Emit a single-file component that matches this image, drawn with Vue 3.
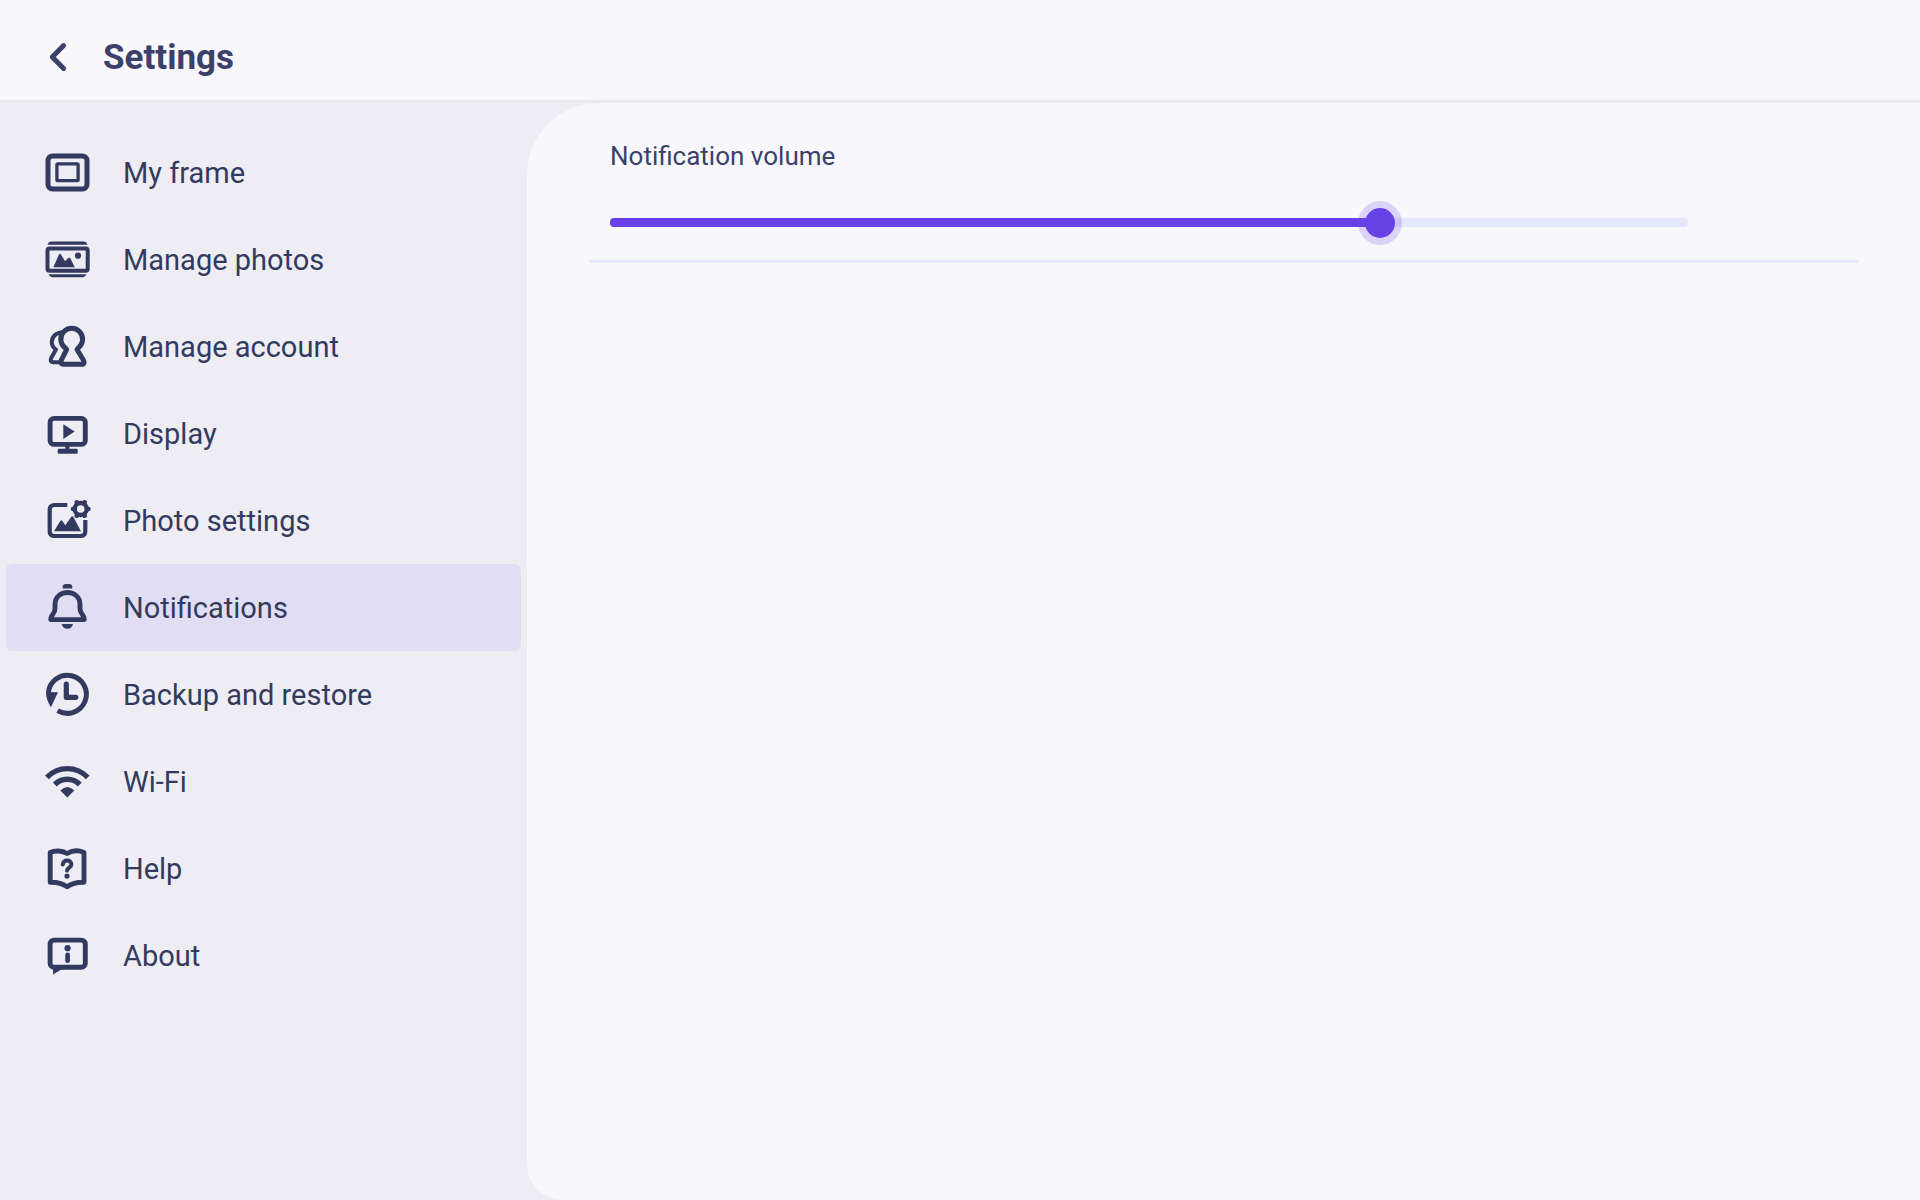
<script setup>
import { ref, computed } from 'vue'

const items = [
  { id: 'frame', label: 'My frame' },
  { id: 'photos', label: 'Manage photos' },
  { id: 'account', label: 'Manage account' },
  { id: 'display', label: 'Display' },
  { id: 'photo-settings', label: 'Photo settings' },
  { id: 'notifications', label: 'Notifications' },
  { id: 'backup', label: 'Backup and restore' },
  { id: 'wifi', label: 'Wi-Fi' },
  { id: 'help', label: 'Help' },
  { id: 'about', label: 'About' },
]

const active = ref('notifications')
const maxVolume = 7
const volume = ref(5)
const fillWidth = computed(() => `${(volume.value / maxVolume) * 100}%`)
</script>

<template>
  <div class="page">
    <header class="header">
      <button class="back" type="button" aria-label="Back">
        <svg width="24" height="32" viewBox="0 1 24 32" fill="none" stroke="currentColor" stroke-width="5" stroke-linecap="round" stroke-linejoin="round">
          <path d="M17.6 4.6 6.3 16 17.6 27.4" />
        </svg>
      </button>
      <h1 class="title">Settings</h1>
    </header>

    <div class="body">
      <nav class="menu" aria-label="Settings sections">
        <a
          v-for="item in items"
          :key="item.id"
          :href="'#' + item.id"
          class="item"
          :class="{ active: item.id === active }"
          :aria-current="item.id === active ? 'page' : undefined"
          @click.prevent="active = item.id"
        >
          <svg class="icon" viewBox="0 1 48 49" fill="none" stroke="currentColor" aria-hidden="true">
            <g v-if="item.id === 'frame'">
              <rect x="5" y="8" width="39" height="33" rx="4.5" stroke-width="5" />
              <rect x="13.9" y="15.900" width="21.200" height="16.800" rx="1" stroke-width="3.300" />
            </g>
            <g v-else-if="item.id === 'photos'">
              <path d="M4.500 9.800Q5.500 6.400 8.500 6.400H40.500Q43.500 6.400 44.500 9.800Z" fill="currentColor" stroke="none" />
              <rect x="4.500" y="13.600" width="40.200" height="22.200" rx="2" stroke-width="4" />
              <path d="M5.500 39.300H43.500Q42.500 42.200 40 42.200H9Q6.500 42.200 5.500 39.300Z" fill="currentColor" stroke="none" />
              <path d="M10.300 32.300 16 19.500Q17 18 18 19.500L22 26.200 25.300 23Q26.300 22 27.300 23.200L31.800 32.300Z" fill="currentColor" stroke="none" />
              <circle cx="35" cy="20.700" r="3.100" fill="currentColor" stroke="none" />
            </g>
            <g v-else-if="item.id === 'account'" stroke-linejoin="round">
              <path d="M20 10.300C13 10.300 8.800 15 8.800 20.200 8.800 23.500 10.500 25.800 13 27.600L8.300 35.800Q6.500 40.200 10.500 40.300H17" stroke-width="4" />
              <path d="M23.700 27.300 22.200 26A10.900 10.900 0 1 1 35.200 26L34 27.500 40.400 38Q42.200 42.200 39 42.300H20Q17 42.200 18.400 38Z" stroke-width="5" />
            </g>
            <g v-else-if="item.id === 'display'">
              <rect x="7.100" y="9.400" width="35.200" height="26" rx="4" stroke-width="4.900" />
              <path d="M20.300 15.300 31.700 22.600 20.300 30Z" fill="currentColor" stroke="none" />
              <path d="M22.300 36H26.500V39.700H33.700Q34.700 39.700 34.700 40.700V43.700Q34.700 44.700 33.700 44.700H15.700Q14.700 44.700 14.700 43.700V40.700Q14.700 39.700 15.700 39.700H22.300Z" fill="currentColor" stroke="none" />
            </g>
            <g v-else-if="item.id === 'photo-settings'">
              <path d="M24.300 9H11.500Q6.700 9 6.700 13.800V35.200Q6.700 40 11.500 40H37.500Q42.300 40 42.300 35.200V24" stroke-width="4.200" />
              <path d="M11 35.300 17.300 25Q18.300 23.500 19.300 25L22.300 29.300 28.300 20.800Q29.300 19.500 30.300 20.800L38 35.300Z" fill="currentColor" stroke="none" />
              <circle cx="37.700" cy="13" r="6" stroke-width="4.400" />
              <path d="M44.900 13H45.400M41.300 6.800 41.600 6.300M34.100 6.800 33.800 6.300M30.500 13H30M34.100 19.200 33.800 19.700M41.300 19.200 41.600 19.700" stroke-width="4.600" stroke-linecap="round" />
            </g>
            <g v-else-if="item.id === 'notifications'">
              <path d="M19.700 5.400V3.600Q20 1 23 1H26Q29 1 29.300 3.600V5.400Z" fill="currentColor" stroke="none" />
              <path d="M7.700 36.600Q7.800 33.500 9.800 31.300 12 28.500 12 25.500V21.500C12 5.500 37 5.500 37 21.500V25.500Q37 28.500 39.200 31.300 41.200 33.500 41.300 36.600Z" stroke-width="4.900" stroke-linejoin="round" />
              <path d="M18.700 40.900H30Q29 45.700 24.400 45.700T18.700 40.900Z" fill="currentColor" stroke="none" />
            </g>
            <g v-else-if="item.id === 'backup'">
              <path d="M14.600 40.600A19 19 0 1 0 5.400 23" stroke-width="5" />
              <path d="M3 22 15 22.300 7.900 37.300Q3 29.500 3 22Z" fill="currentColor" stroke="none" />
              <path d="M23.300 14.200V27.300H32.800" stroke-width="5.200" stroke-linecap="round" stroke-linejoin="round" />
            </g>
            <g v-else-if="item.id === 'wifi'">
              <path d="M3.900 20.400A28 28 0 0 1 44.700 20.400" stroke-width="5.200" />
              <path d="M11.800 27.500A17.500 17.500 0 0 1 36.800 27.500" stroke-width="5.400" />
              <path d="M17.300 33.500Q24.300 26.500 31.300 33.500L24.300 40.400Z" fill="currentColor" stroke="none" />
            </g>
            <g v-else-if="item.id === 'help'">
              <path d="M7.200 8.500C12 6.300 19 6.500 24.100 9.500 29.200 6.500 36 6.300 41 8.500V38.300C34 38 29 39.500 24.100 42.800 19.200 39.500 14 38 7.200 38.300Z" stroke-width="4.900" stroke-linejoin="round" />
              <path d="M19.800 20.600C19.800 15.200 28.400 15.200 28.400 20.600 28.400 23.600 24.200 23.600 24 26.600" stroke-width="4" stroke-linecap="round" />
              <circle cx="24" cy="32.100" r="2.600" fill="currentColor" stroke="none" />
            </g>
            <g v-else>
              <rect x="7.100" y="9.100" width="35.200" height="27.200" rx="4" stroke-width="4.900" />
              <path d="M10 37V43.500L19 38V36Z" fill="currentColor" stroke="none" />
              <circle cx="24.600" cy="17.200" r="3.100" fill="currentColor" stroke="none" />
              <path d="M24.600 23.800V29.700" stroke-width="4.700" stroke-linecap="round" />
            </g>
          </svg>
          <span>{{ item.label }}</span>
        </a>
      </nav>

      <main class="content">
        <section class="setting">
          <label class="label" for="volume">Notification volume</label>
          <div class="slider">
            <div class="fill" :style="{ width: fillWidth }"></div>
            <input id="volume" v-model.number="volume" class="range" type="range" min="0" :max="maxVolume" />
          </div>
        </section>
      </main>
    </div>
  </div>
</template>

<style>
body {
  margin: 0;
}
</style>

<style scoped>
.page {
  display: flex;
  flex-direction: column;
  min-height: 100vh;
  background: #eeedf3;
  color: #333a60;
  font-family: Roboto, "Liberation Sans", sans-serif;
}

.header {
  display: flex;
  align-items: center;
  gap: 33px;
  height: 100px;
  padding: 16px 46px 0;
  box-sizing: border-box;
  background: #f8f7fc;
  color: #3b4169;
}

.back {
  display: flex;
  padding: 0;
  border: 0;
  background: none;
  color: inherit;
  cursor: pointer;
}

.title {
  margin: 0;
  font-size: 35px;
  font-weight: 700;
  line-height: 40px;
}

.body {
  display: flex;
  flex: 1;
  border-top: 3px solid #e9e8ee;
}

.menu {
  flex: none;
  width: 527px;
  padding: 26px 6px;
  box-sizing: border-box;
}

.item {
  display: flex;
  align-items: center;
  gap: 32px;
  height: 87px;
  padding: 2px 37px 0;
  box-sizing: border-box;
  border-radius: 6px;
  color: inherit;
  font-size: 29px;
  line-height: 35px;
  text-decoration: none;
}

.item.active {
  background: #e1def3;
}

.icon {
  flex: none;
  width: 48px;
  height: 49px;
  overflow: visible;
}

.content {
  flex: 1;
  padding: 36px 62px;
  border-radius: 72px 0 0 36px;
  background: #f8f7fc;
}

.setting {
  padding: 0 0 33px 21px;
  border-bottom: 3px solid #e5e7fb;
}

.label {
  display: block;
  color: #3b4169;
  font-size: 26px;
  line-height: 34px;
}

.slider {
  position: relative;
  height: 9px;
  margin: 45px 170px 0 0;
  border-radius: 4px;
  background: #e5e7fb;
}

.fill {
  height: 9px;
  border-radius: 4px;
  background: #6741e6;
}

.range {
  position: absolute;
  top: -17px;
  left: -22px;
  width: calc(100% + 44px);
  height: 44px;
  margin: 0;
  background: none;
  appearance: none;
  cursor: pointer;
}

.range::-webkit-slider-thumb {
  width: 44px;
  height: 44px;
  border: 7px solid rgba(103, 65, 230, 0.2);
  border-radius: 50%;
  box-sizing: border-box;
  background: #6741e6;
  background-clip: padding-box;
  appearance: none;
}
</style>
